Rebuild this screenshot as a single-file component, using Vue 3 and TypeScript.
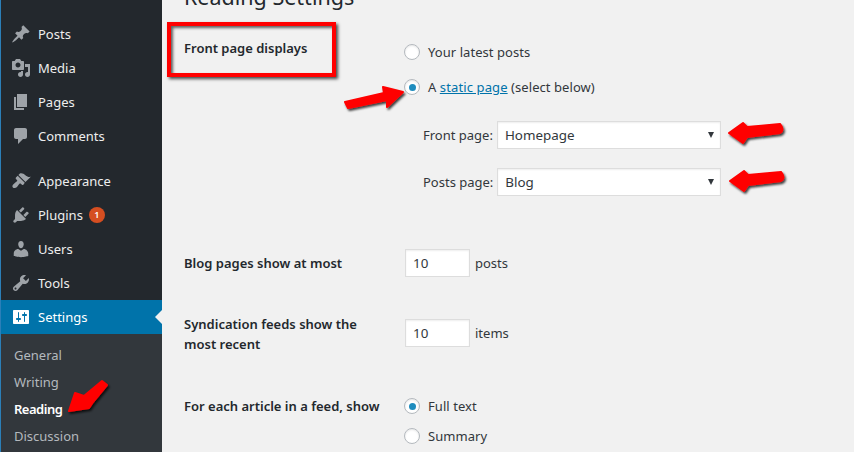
<script setup lang="ts">
interface Item { label: string; d: string; gap?: boolean; badge?: string; current?: boolean }
const items: Item[] = [
  { label: 'Posts', d: 'M10.44 3.02l1.82-1.82 6.36 6.35-1.83 1.82c-1.05-.68-2.48-.57-3.41.36l-.75.75c-.92.93-1.04 2.35-.35 3.41l-1.83 1.82-2.41-2.41-2.8 2.79c-.42.42-3.38 2.71-3.8 2.29s1.86-3.39 2.28-3.81l2.79-2.79L4.1 9.36l1.83-1.82c1.05.69 2.48.57 3.4-.36l.75-.75c.93-.92 1.05-2.35.36-3.41z' },
  { label: 'Media', d: 'M13 11V4c0-.55-.45-1-1-1h-1.67L9 1H5L3.67 3H2c-.55 0-1 .45-1 1v7c0 .55.45 1 1 1h10c.55 0 1-.45 1-1zM7 4.5c1.38 0 2.5 1.12 2.5 2.5S8.38 9.5 7 9.5 4.5 8.38 4.5 7 5.62 4.5 7 4.5zM14 6h5v10.5c0 1.38-1.12 2.5-2.5 2.5S14 17.88 14 16.5s1.12-2.5 2.5-2.5c.17 0 .34.02.5.05V9h-3V6zm-4 8.05V13h2v3.5c0 1.38-1.12 2.5-2.5 2.5S7 17.88 7 16.5 8.12 14 9.5 14c.17 0 .34.02.5.05z' },
  { label: 'Pages', d: 'M6 15V2h10v13H6zm-1 1h8v2H3V5h2v11z' },
  { label: 'Comments', d: 'M5 2h9c1.1 0 2 .9 2 2v7c0 1.1-.9 2-2 2h-2l-5 5v-5H5c-1.1 0-2-.9-2-2V4c0-1.1.9-2 2-2z' },
  { label: 'Appearance', gap: true, d: 'M14.48 11.06L7.41 3.99l1.5-1.5c.5-.56 2.3-.47 3.51.32 1.21.8 1.43 1.28 2.91 2.1 1.18.64 2.45 1.26 4.45.85zm-.71.71L6.7 4.7 4.93 6.47c-.39.39-.39 1.02 0 1.41l1.06 1.06c.39.39.39 1.03 0 1.42-.6.6-1.43 1.11-2.21 1.69-.35.26-.7.53-1.01.84C1.43 13.71.96 15.65 1.91 16.6c.95.95 2.89.48 4.02-.65.31-.31.58-.66.84-1.01.58-.78 1.09-1.61 1.69-2.21.39-.39 1.03-.39 1.42 0l1.06 1.06c.39.39 1.02.39 1.41 0z' },
  { label: 'Plugins', badge: '1', d: 'M13.11 4.36L9.87 7.6 8 5.73l3.24-3.24c.35-.34 1.05-.2 1.56.32.52.51.66 1.21.31 1.55zm-8 1.77l.91-1.12 9.01 9.01-1.19.84c-.71.71-2.63 1.16-3.82 1.16H6.14L4.9 17.26c-.59.59-1.54.59-2.12 0-.59-.58-.59-1.53 0-2.12l1.24-1.24v-3.88c0-1.13.4-3.19 1.09-3.89zm7.26 3.97l3.24-3.24c.34-.35 1.04-.21 1.55.31.52.51.66 1.21.31 1.55l-3.24 3.25z' },
  { label: 'Users', d: 'M10 9.25c-2.27 0-2.73-3.44-2.73-3.44C7 4.02 7.82 2 9.97 2c2.16 0 2.98 2.02 2.71 3.81 0 0-.41 3.44-2.68 3.44zm0 2.57L12.72 10c2.39 0 4.52 2.33 4.52 4.53v2.49s-3.65 1.13-7.24 1.13c-3.65 0-7.24-1.13-7.24-1.13v-2.49c0-2.25 1.94-4.48 4.47-4.48z' },
  { label: 'Tools', d: 'M16.68 9.77c-1.34 1.34-3.3 1.67-4.95.99l-5.41 6.52c-.99.99-2.59.99-3.58 0s-.99-2.59 0-3.57l6.52-5.42c-.68-1.65-.35-3.61.99-4.95 1.28-1.28 3.12-1.62 4.72-1.06l-2.89 2.89 2.82 2.82 2.86-2.87c.53 1.58.18 3.39-1.08 4.65zM3.81 16.21c.4.39 1.04.39 1.43 0 .4-.4.4-1.04 0-1.43-.39-.4-1.03-.4-1.43 0-.39.39-.39 1.03 0 1.43z' },
  { label: 'Settings', current: true, d: 'M18 16V4c0-.55-.45-1-1-1H3c-.55 0-1 .45-1 1v12c0 .55.45 1 1 1h14c.55 0 1-.45 1-1zM8 11h1c.55 0 1 .45 1 1s-.45 1-1 1H8v1.5c0 .28-.22.5-.5.5s-.5-.22-.5-.5V13H6c-.55 0-1-.45-1-1s.45-1 1-1h1V5.5c0-.28.22-.5.5-.5s.5.22.5.5V11zm5-2h-1c-.55 0-1-.45-1-1s.45-1 1-1h1V5.5c0-.28.22-.5.5-.5s.5.22.5.5V7h1c.55 0 1 .45 1 1s-.45 1-1 1h-1v5.5c0 .28-.22.5-.5.5s-.5-.22-.5-.5V9z' },
]
const subs = ['General', 'Writing', 'Reading', 'Discussion']
</script>

<template>
  <div class="screen">
    <aside class="sidebar">
      <ul class="menu">
        <li v-for="it in items" :key="it.label" class="item" :class="{ gap: it.gap, current: it.current }">
          <svg class="icon" viewBox="0 0 20 20"><path :d="it.d" fill="currentColor" /></svg>
          <span>{{ it.label }}</span>
          <span v-if="it.badge" class="badge">{{ it.badge }}</span>
        </li>
      </ul>
      <ul class="submenu">
        <li v-for="s in subs" :key="s" :class="{ active: s === 'Reading' }">{{ s }}</li>
      </ul>
    </aside>

    <main class="main">
      <h1>Reading Settings</h1>

      <section class="row first">
        <div class="label">Front page displays</div>
        <div class="field">
          <label class="radio"><span class="dot"></span>Your latest posts</label>
          <label class="radio"><span class="dot on"></span>A&nbsp;<a>static page</a>&nbsp;(select below)</label>
          <div class="pick pick-first">
            <span>Front page:</span>
            <div class="select"><span>Homepage</span><i></i></div>
          </div>
          <div class="pick">
            <span>Posts page:</span>
            <div class="select"><span>Blog</span><i></i></div>
          </div>
        </div>
      </section>

      <section class="row blog">
        <div class="label">Blog pages show at most</div>
        <div class="field inline"><div class="num">10</div><span>posts</span></div>
      </section>

      <section class="row feeds">
        <div class="label two">Syndication feeds show the most recent</div>
        <div class="field inline"><div class="num">10</div><span>items</span></div>
      </section>

      <section class="row article">
        <div class="label">For each article in a feed, show</div>
        <div class="field">
          <label class="radio small"><span class="dot on"></span>Full text</label>
          <label class="radio small"><span class="dot"></span>Summary</label>
        </div>
      </section>
    </main>

    <div class="redbox"></div>

    <svg class="marks" viewBox="0 0 854 452" width="854" height="452">
      <defs>
        <filter id="sh" x="-20%" y="-20%" width="150%" height="150%">
          <feDropShadow dx="1.5" dy="2" stdDeviation="0.8" flood-color="#000" flood-opacity=".75" />
        </filter>
      </defs>
      <g fill="#f00" stroke="#f00" stroke-width="2" stroke-linejoin="round" filter="url(#sh)">
        <path d="M345 102 L384 93 L383 87 L403 92 L387 107 L387 100 L348 108 Z" />
        <path d="M729 133 L743 123 L747 127 L780 124 Q785 130 780 133 L747 137 L743 143 Z" />
        <path d="M730 181 L744 171 L748 175 L781 172 Q786 178 781 181 L748 185 L744 191 Z" />
        <path d="M69 411 L75 393 L84 396 L102 381 L107 385 L93 402 L89 408 Z" />
      </g>
    </svg>
  </div>
</template>

<style scoped>
.screen {
  position: relative;
  display: flex;
  width: 854px;
  height: 452px;
  overflow: hidden;
  background: #f1f1f1;
  color: #23282d;
  font-family: "Noto Sans", "Open Sans", sans-serif;
  font-size: 13px;
}
.sidebar {
  flex: none;
  display: flex;
  flex-direction: column;
  width: 162px;
  padding-top: 17px;
  box-sizing: border-box;
  background: #23282d;
  border-left: 1px solid #2b7fb8;
}
ul { list-style: none; margin: 0; padding: 0; }
.item {
  display: flex;
  align-items: center;
  height: 34px;
  padding-left: 10px;
  color: #eee;
  font-size: 13px;
}
.item.gap { margin-top: 11px; }
.icon { width: 20px; height: 20px; margin-right: 7px; color: #9ea3a8; flex: none; }
.item.current { background: #0073aa; color: #fff; position: relative; }
.item.current .icon { color: #fff; }
.item.current::after {
  content: "";
  position: absolute;
  right: 0;
  top: 10px;
  border: 7px solid transparent;
  border-left-width: 0;
  border-right-color: #f1f1f1;
}
.badge {
  width: 16px;
  height: 16px;
  margin-left: 6px;
  border-radius: 50%;
  background: #d54e21;
  color: #fff;
  font-size: 9px;
  font-weight: 600;
  line-height: 16px;
  text-align: center;
}
.submenu { flex: 1; background: #32373c; padding-top: 8px; }
.submenu li {
  height: 27px;
  line-height: 27px;
  padding-left: 13px;
  color: #b4b9be;
  font-size: 13px;
}
.submenu li.active { color: #fff; font-weight: 600; letter-spacing: -.5px; }
.main { flex: 1; padding-left: 22px; min-width: 0; }
h1 {
  margin: -18px 0 0;
  height: 29px;
  font-size: 21.5px;
  font-weight: 400;
  line-height: 29px;
}
.row { display: flex; }
.label { flex: none; width: 221px; font-weight: 600; line-height: 20px; }
.label.two { width: 190px; margin-right: 31px; }
.first { margin-top: 31px; }
.first .label { margin-top: -4px; }
.field { color: #32373c; }
.inline { display: flex; align-items: center; height: 28px; }
.radio { display: flex; align-items: center; height: 20px; margin-bottom: 15px; margin-left: -1px; letter-spacing: .06px; }
.radio.small { margin-bottom: 10px; }
.dot {
  flex: none;
  display: flex;
  align-items: center;
  justify-content: center;
  width: 14px;
  height: 14px;
  margin-right: 8px;
  border: 1px solid #b4b9be;
  border-radius: 50%;
  background: #fff;
  box-shadow: inset 0 1px 2px rgba(0, 0, 0, .1);
}
.dot.on::before { content: ""; width: 7px; height: 7px; border-radius: 50%; background: #1e8cbe; }
a { color: #0073aa; text-decoration: underline; letter-spacing: .12px; }
.pick { display: flex; align-items: center; gap: 4px; margin-left: 18px; margin-top: 19px; }
.pick-first { margin-top: 24px; }
.select {
  display: flex;
  align-items: center;
  justify-content: space-between;
  box-sizing: border-box;
  width: 224px;
  height: 28px;
  padding: 0 6px 0 7px;
  border: 1px solid #ddd;
  background: #fff;
  box-shadow: inset 0 1px 2px rgba(0, 0, 0, .07);
  color: #32373c;
  font-size: 13.4px;
}
.select i {
  width: 0;
  height: 0;
  border: 3.5px solid transparent;
  border-top: 6px solid #32373c;
  border-bottom: 0;
}
.num {
  box-sizing: border-box;
  width: 65px;
  height: 28px;
  margin-right: 5px;
  padding-left: 7px;
  border: 1px solid #ddd;
  background: #fff;
  box-shadow: inset 0 1px 2px rgba(0, 0, 0, .07);
  color: #32373c;
  font-size: 13.4px;
  line-height: 26px;
}
.blog { margin-top: 53px; align-items: center; height: 28px; }
.feeds { margin-top: 42px; }
.feeds .label { margin-top: -5px; }
.article { margin-top: 42px; }
.redbox {
  position: absolute;
  left: 167px;
  top: 22px;
  width: 161px;
  height: 47px;
  border: 4px solid #f00;
  box-shadow: 2px 2px 3px rgba(0, 0, 0, .7), inset 2px 2px 3px rgba(0, 0, 0, .6);
  pointer-events: none;
}
.marks { position: absolute; left: 0; top: 0; pointer-events: none; }
</style>
